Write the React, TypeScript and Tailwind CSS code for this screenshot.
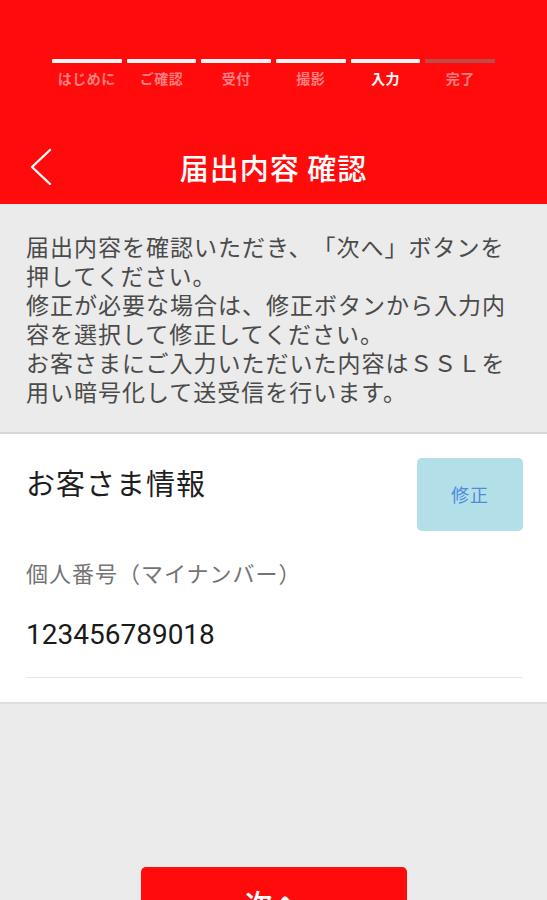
const steps = [
  { label: "はじめに", state: "done" },
  { label: "ご確認", state: "done" },
  { label: "受付", state: "done" },
  { label: "撮影", state: "done" },
  { label: "入力", state: "current" },
  { label: "完了", state: "todo" },
];

const introLines = [
  "届出内容を確認いただき、「次へ」ボタンを",
  "押してください。",
  "修正が必要な場合は、修正ボタンから入力内",
  "容を選択して修正してください。",
  "お客さまにご入力いただいた内容はＳＳＬを",
  "用い暗号化して送受信を行います。",
];

const jp = "font-['Noto_Sans_CJK_JP',sans-serif]";

const Header = () => (
  <header className="bg-[#ff0b0b] pt-[59px] pb-[9px]">
    {/* Progress steps */}
    <div className="flex gap-[5px] px-[52px]">
      {steps.map((s) => (
        <div key={s.label} className="flex-1 flex flex-col items-center">
          <div
            className={
              s.state === "todo"
                ? "h-[4px] w-full rounded-[1px] bg-[#c04a4a]"
                : "h-[4px] w-full rounded-[1px] bg-[#fff4f4]"
            }
          />
          <span
            className={
              s.state === "current"
                ? "mt-[5px] text-[14px] leading-[20px] tracking-[0.5px] font-bold text-white"
                : "mt-[5px] text-[14px] leading-[20px] tracking-[0.5px] font-bold text-[#ff8080]"
            }
          >
            {s.label}
          </span>
        </div>
      ))}
    </div>

    {/* Title row */}
    <div className="mt-[51px] grid grid-cols-[80px_1fr_80px] items-center h-[56px]">
      <button className="pl-[29px] flex items-center" aria-label="戻る">
        <svg width="24" height="38" viewBox="0 0 24 38" fill="none">
          <polyline
            points="21,2 3,19 21,36"
            stroke="white"
            strokeWidth="2.4"
            strokeLinecap="round"
            strokeLinejoin="round"
          />
        </svg>
      </button>
      <h1 className="text-center text-white text-[29px] leading-[40px] tracking-[1px] font-medium">
        届出内容 確認
      </h1>
      <div />
    </div>
  </header>
);

export default function App() {
  return (
    <div className={`min-h-screen bg-[#ebebeb] ${jp} [text-spacing-trim:space-all]`}>
      <Header />

      {/* Intro */}
      <section className="px-[26px] pt-[28px] pb-[26px]">
        <p className="text-[23px] leading-[29px] tracking-[1px] text-[#4a4a4a] whitespace-nowrap">
          {introLines.map((line, i) => (
            <span key={i}>
              {line}
              {i < introLines.length - 1 && <br />}
            </span>
          ))}
        </p>
      </section>

      {/* Customer info card */}
      <section className="bg-white border-t-2 border-[#d8d8d8] border-b-2 border-b-[#dedede] pt-[24px] pl-[26px] pr-[24px] pb-[24px]">
        <div className="flex items-start justify-between">
          <h2 className="mt-[6px] text-[29px] leading-[36px] tracking-[1px] text-[#1e1e1e]">
            お客さま情報
          </h2>
          <button className="w-[106px] h-[73px] rounded-[5px] bg-[#b3dfe8] text-[#4f8cd8] text-[18px] tracking-[1px] flex items-center justify-center">
            修正
          </button>
        </div>
        <p className="mt-[26px] text-[22px] leading-[30px] tracking-[1px] text-[#747474]">
          個人番号（マイナンバー）
        </p>
        <p className="mt-[30px] font-['Roboto',sans-serif] text-[28px] leading-[36px] text-[#1a1a1a]">
          123456789018
        </p>
        <div className="mt-[24px] h-px bg-[#e6e6e6]" />
      </section>

      {/* Next button */}
      <div className="pt-[163px] pb-[40px] flex justify-center">
        <button className="w-[266px] h-[72px] rounded-[5px] bg-[#ff0b0b] text-white text-[28px] font-medium tracking-[1px]">
          次へ
        </button>
      </div>
    </div>
  );
}
